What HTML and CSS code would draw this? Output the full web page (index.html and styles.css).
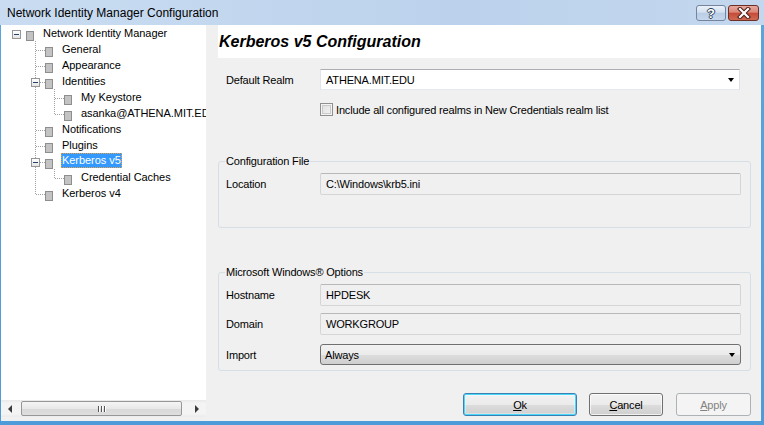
FILE: index.html
```html
<!DOCTYPE html>
<html>
<head>
<meta charset="utf-8">
<title>Network Identity Manager Configuration</title>
<link rel="stylesheet" href="styles.css">
</head>
<body>
<div class="window">
  <div class="titlebar">
    <span class="title">Network Identity Manager Configuration</span>
    <div class="caption-btns">
      <div class="cap help">?</div>
      <div class="cap close">
        <svg width="16" height="12" viewBox="0 0 16 12">
          <path d="M4 2 L12 10 M12 2 L4 10" stroke="#4a1e18" stroke-width="4.2" stroke-linecap="square" fill="none"/>
          <path d="M4 2 L12 10 M12 2 L4 10" stroke="#ffffff" stroke-width="2.2" stroke-linecap="square" fill="none"/>
        </svg>
      </div>
    </div>
  </div>
  <div class="client">
    <div class="tree-pane">
      <div class="tree">
        <svg class="tree-lines" width="205" height="200" viewBox="0 0 205 200">
          <g stroke="#a0a0a0" stroke-width="1" stroke-dasharray="1 1" shape-rendering="crispEdges" fill="none">
            <path d="M34.5 16 V170"/>
            <path d="M35 25.5 H44 M35 41.5 H44 M39 57.5 H44 M35 105.5 H44 M35 121.5 H44 M39 137.5 H44 M35 169.5 H44"/>
            <path d="M53.5 64 V90 M53.5 144 V154"/>
            <path d="M54 73.5 H63 M54 89.5 H63 M54 153.5 H63"/>
          </g>
        </svg>
        <div class="node l0"><span class="exp"></span><span class="ico"></span><span class="lbl">Network Identity Manager</span></div>
        <div class="node l1"><span class="exp none"></span><span class="ico"></span><span class="lbl">General</span></div>
        <div class="node l1"><span class="exp none"></span><span class="ico"></span><span class="lbl">Appearance</span></div>
        <div class="node l1"><span class="exp"></span><span class="ico"></span><span class="lbl">Identities</span></div>
        <div class="node l2"><span class="exp none"></span><span class="ico"></span><span class="lbl">My Keystore</span></div>
        <div class="node l2"><span class="exp none"></span><span class="ico"></span><span class="lbl">asanka@ATHENA.MIT.EDU</span></div>
        <div class="node l1"><span class="exp none"></span><span class="ico"></span><span class="lbl">Notifications</span></div>
        <div class="node l1"><span class="exp none"></span><span class="ico"></span><span class="lbl">Plugins</span></div>
        <div class="node l1"><span class="exp"></span><span class="ico"></span><span class="lbl selected">Kerberos v5</span></div>
        <div class="node l2"><span class="exp none"></span><span class="ico"></span><span class="lbl">Credential Caches</span></div>
        <div class="node l1"><span class="exp none"></span><span class="ico"></span><span class="lbl">Kerberos v4</span></div>
      </div>
      <div class="hscroll">
        <div class="sb-btn"><span class="tri-left"></span></div>
        <div class="sb-track">
          <div class="sb-thumb"><span class="grip"></span><span class="grip"></span><span class="grip"></span></div>
        </div>
        <div class="sb-btn"><span class="tri-right"></span></div>
      </div>
    </div>
    <div class="content">
      <div class="header"><h1>Kerberos v5 Configuration</h1></div>
      <div class="row top-row">
        <span class="label">Default Realm</span>
        <div class="combo edit"><span class="val">ATHENA.MIT.EDU</span><span class="drop"></span></div>
      </div>
      <div class="check-row">
        <span class="checkbox"></span><span>Include all configured realms in New Credentials realm list</span>
      </div>
      <fieldset class="group g1">
        <legend>Configuration File</legend>
        <div class="row first">
          <span class="label">Location</span>
          <div class="field">C:\Windows\krb5.ini</div>
        </div>
      </fieldset>
      <fieldset class="group g2">
        <legend>Microsoft Windows® Options</legend>
        <div class="row first">
          <span class="label">Hostname</span>
          <div class="field">HPDESK</div>
        </div>
        <div class="row second">
          <span class="label">Domain</span>
          <div class="field">WORKGROUP</div>
        </div>
        <div class="row third">
          <span class="label">Import</span>
          <div class="combo list"><span class="val">Always</span><span class="drop"></span></div>
        </div>
      </fieldset>
      <div class="buttons">
        <div class="btn ok default"><span><u>O</u>k</span></div>
        <div class="btn cancel"><span><u>C</u>ancel</span></div>
        <div class="btn apply disabled"><span><u>A</u>pply</span></div>
      </div>
    </div>
  </div>
</div>
</body>
</html>
```

FILE: styles.css
```css
html, body {
  margin: 0;
  padding: 0;
}
body {
  width: 764px;
  height: 425px;
  overflow: hidden;
  font-family: "Liberation Sans", Arial, sans-serif;
  font-size: 11px;
  color: #000;
}
.window {
  width: 764px;
  height: 425px;
  display: flex;
  flex-direction: column;
  background: linear-gradient(to bottom, #c6d9ef 0px, #b9cfea 25px, #5aa5dd 25px, #4d9bd8 425px);
}
.titlebar {
  height: 25px;
  flex: none;
  display: flex;
  align-items: center;
  justify-content: space-between;
  background: linear-gradient(to right, #c9dcf1, #bcd2ec 60%, #c3d7ee);
}
.title {
  font-size: 12px;
  padding-left: 7px;
  margin-top: 1px;
  color: #000;
}
.caption-btns {
  display: flex;
  align-items: flex-start;
  align-self: flex-start;
  margin-top: 5px;
  margin-right: 5px;
  gap: 2px;
}
.cap {
  box-sizing: border-box;
  height: 16px;
  border-radius: 3px;
  display: flex;
  align-items: center;
  justify-content: center;
}
.help {
  width: 30px;
  border: 1px solid #73849c;
  background: linear-gradient(to bottom, #eaf1f9 0%, #d3e0f0 45%, #b9cde6 50%, #c6d7ec 100%);
  color: #fff;
  font-weight: bold;
  font-size: 13px;
  text-shadow: 1px 0 0 #2c3e57, -1px 0 0 #2c3e57, 0 1px 0 #2c3e57, 0 -1px 0 #2c3e57;
}
.close {
  width: 31px;
  border: 1px solid #6d2e26;
  background: linear-gradient(to bottom, #e7a89d 0%, #d98677 45%, #c54a38 50%, #cf6b52 100%);
}
.client {
  flex: 1;
  display: flex;
  margin: 0 3px 4px 1px;
  background: #f0f0f0;
  min-height: 0;
}
.tree-pane {
  width: 205px;
  flex: none;
  display: flex;
  flex-direction: column;
  background: #fff;
  margin-bottom: 4px;
  overflow: hidden;
}
.tree {
  flex: 1;
  position: relative;
  overflow: hidden;
}
.tree-lines {
  position: absolute;
  left: 0;
  top: 0;
}
.node {
  position: relative;
  height: 16px;
  display: flex;
  align-items: flex-start;
  white-space: nowrap;
  letter-spacing: -0.05px;
}
.node.l0 { padding-left: 11px; }
.node.l1 { padding-left: 30px; }
.node.l2 { padding-left: 49px; }
.exp {
  box-sizing: border-box;
  width: 9px;
  height: 9px;
  margin-top: 5px;
  margin-right: 5px;
  border: 1px solid #969696;
  background: linear-gradient(to bottom, #ffffff, #e4e4e4);
  position: relative;
  flex: none;
}
.exp::after {
  content: "";
  position: absolute;
  left: 1px;
  top: 3px;
  width: 5px;
  height: 1px;
  background: #21426f;
}
.exp.none {
  visibility: hidden;
}
.ico {
  box-sizing: border-box;
  width: 8px;
  height: 10px;
  margin-top: 6px;
  margin-right: 8px;
  border: 1px solid #8e8e8e;
  background: #c3c3c3;
  flex: none;
}
.lbl {
  height: 16px;
  line-height: 16px;
  padding: 0 1px;
  box-sizing: border-box;
}
.lbl.selected {
  background: #3399ff;
  color: #fff;
  outline: 1px dotted #e8a040;
  outline-offset: -1px;
  height: 15px;
  line-height: 15px;
}
.hscroll {
  height: 17px;
  display: flex;
  background: linear-gradient(to bottom, #e9e9e9, #f4f4f4 20%, #f4f4f4 80%, #ebebeb);
  flex: none;
}
.sb-btn {
  width: 18px;
  display: flex;
  align-items: center;
  justify-content: center;
}
.tri-left {
  width: 0;
  height: 0;
  border-top: 4px solid transparent;
  border-bottom: 4px solid transparent;
  border-right: 4px solid #3c3c3c;
}
.tri-right {
  width: 0;
  height: 0;
  border-top: 4px solid transparent;
  border-bottom: 4px solid transparent;
  border-left: 4px solid #3c3c3c;
}
.sb-track {
  flex: 1;
  display: flex;
  padding: 1px 0;
}
.sb-thumb {
  box-sizing: border-box;
  width: 161px;
  margin-left: 2px;
  height: 15px;
  border: 1px solid #979797;
  border-radius: 2px;
  background: linear-gradient(to bottom, #f5f5f5 0%, #e8e8e8 50%, #d9d9d9 51%, #dedede 100%);
  display: flex;
  align-items: center;
  justify-content: center;
  gap: 1px;
}
.grip {
  width: 1px;
  height: 6px;
  background: #555;
  border-right: 1px solid #fff;
}
.content {
  flex: 1;
  display: flex;
  flex-direction: column;
  padding: 0 10px 5px 12px;
  min-width: 0;
  letter-spacing: -0.17px;
}
.header {
  height: 33px;
  background: #fff;
  margin-right: -10px;
  flex: none;
}
.header h1 {
  margin: 0;
  padding-left: 1px;
  font-size: 16px;
  line-height: 33px;
  font-weight: bold;
  font-style: italic;
  letter-spacing: 0;
  color: #000;
}
.row {
  display: flex;
  align-items: center;
}
.row .label {
  width: 94px;
  flex: none;
}
.top-row {
  margin-top: 11px;
  padding-left: 8px;
  padding-right: 11px;
}
.combo {
  flex: 1;
  box-sizing: border-box;
  height: 21px;
  display: flex;
  align-items: center;
}
.combo .val {
  flex: 1;
}
.combo.edit {
  background: #fff;
  border: 1px solid #abadb3;
  border-left-color: #e2e3ea;
  border-right-color: #dbdfe6;
  border-bottom-color: #e3e9ef;
  padding-left: 5px;
}
.combo.list {
  border: 1px solid #707070;
  border-radius: 3px;
  background: linear-gradient(to bottom, #f2f2f2 0%, #ebebeb 50%, #dddddd 51%, #cfcfcf 100%);
  padding-left: 4px;
}
.drop {
  width: 0;
  height: 0;
  border-left: 3.5px solid transparent;
  border-right: 3.5px solid transparent;
  border-top: 4px solid #000;
  margin-right: 5px;
}
.check-row {
  margin-top: 13px;
  padding-left: 102px;
  height: 13px;
  display: flex;
  align-items: center;
}
.checkbox {
  box-sizing: border-box;
  width: 13px;
  height: 13px;
  border: 1px solid #8e8f8f;
  background: linear-gradient(135deg, #dcdcdc, #f6f6f6);
  box-shadow: inset 0 0 0 1px #f4f4f4, inset 0 0 0 2px #c9c9c9;
  margin-right: 3px;
  flex: none;
}
.group {
  margin: 0;
  border: 1px solid #d5dfe5;
  border-radius: 3px;
  padding: 0 9px 0 7px;
  min-width: 0;
}
.group legend {
  padding: 0 1px;
  margin-left: -1px;
  line-height: 13px;
  font-size: 11px;
}
.g1 {
  margin-top: 39px;
  padding-bottom: 32px;
}
.g2 {
  margin-top: 38px;
  padding-bottom: 5px;
}
.row.first { margin-top: 5px; }
.row.second { margin-top: 7px; }
.row.third { margin-top: 9px; }
.field {
  flex: 1;
  box-sizing: border-box;
  height: 22px;
  line-height: 20px;
  padding-left: 5px;
  background: #f0f0f0;
  border: 1px solid #d5d5d5;
  border-top-color: #b8b8b8;
  border-radius: 2px;
}
.buttons {
  margin-top: auto;
  display: flex;
  justify-content: flex-end;
}
.btn {
  box-sizing: border-box;
  height: 23px;
  border-radius: 3px;
  display: flex;
  align-items: center;
  justify-content: center;
  border: 1px solid #707070;
  background: linear-gradient(to bottom, #f2f2f2 0%, #ebebeb 50%, #dddddd 51%, #cfcfcf 100%);
  box-shadow: inset 0 0 0 1px rgba(255,255,255,0.7);
}
.btn.ok { width: 114px; }
.btn.cancel { width: 74px; margin-left: 12px; }
.btn.apply { width: 75px; margin-left: 13px; }
.btn.default {
  border-color: #3c7fb1;
  box-shadow: inset 0 0 0 1px #48d8fb, inset 0 0 0 2px rgba(255,255,255,0.3);
}
.btn.disabled {
  border-color: #adb2b5;
  background: #f4f4f4;
  color: #838383;
  box-shadow: none;
}
```
